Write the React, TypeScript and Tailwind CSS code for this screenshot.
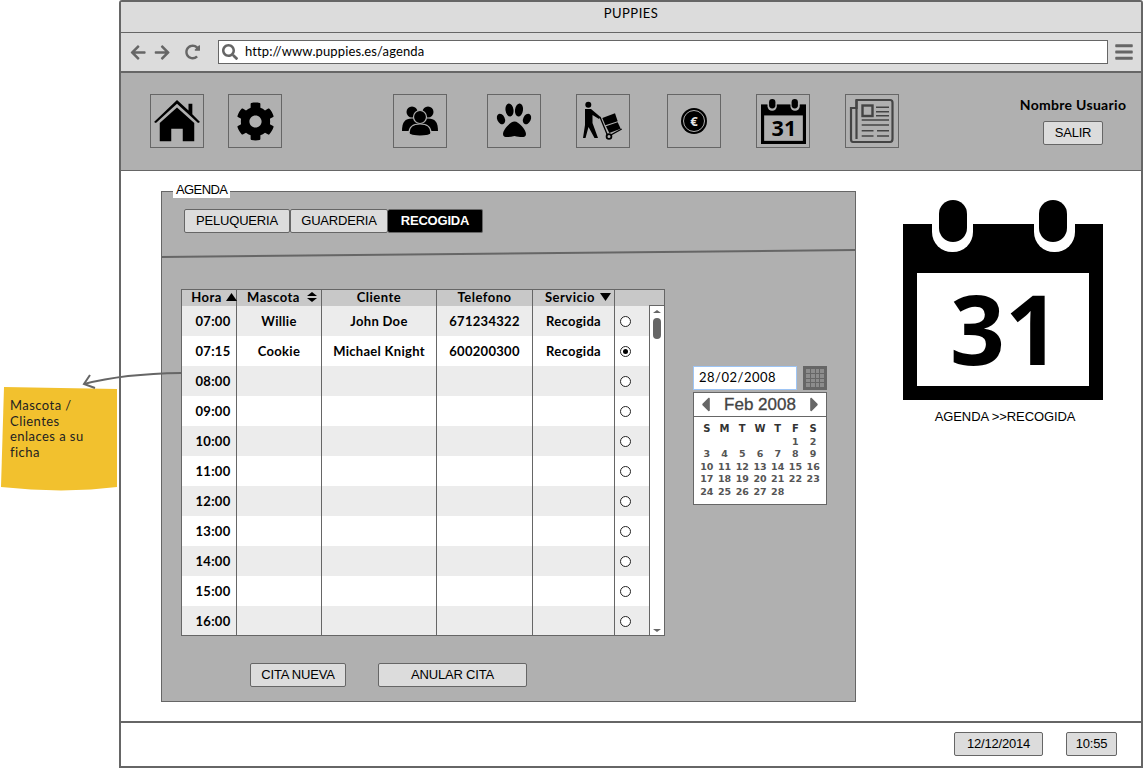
import {
  FaArrowLeft,
  FaArrowRight,
  FaBars,
  FaCaretLeft,
  FaCaretRight,
  FaCog,
  FaRedoAlt,
  FaSearch,
} from "react-icons/fa";

const rows = [
  { hora: "07:00", mascota: "Willie", cliente: "John Doe", telefono: "671234322", servicio: "Recogida" },
  { hora: "07:15", mascota: "Cookie", cliente: "Michael Knight", telefono: "600200300", servicio: "Recogida", selected: true },
  { hora: "08:00" },
  { hora: "09:00" },
  { hora: "10:00" },
  { hora: "11:00" },
  { hora: "12:00" },
  { hora: "13:00" },
  { hora: "14:00" },
  { hora: "15:00" },
  { hora: "16:00" },
];

const weeks = [
  ["", "", "", "", "", "1", "2"],
  ["3", "4", "5", "6", "7", "8", "9"],
  ["10", "11", "12", "13", "14", "15", "16"],
  ["17", "18", "19", "20", "21", "22", "23"],
  ["24", "25", "26", "27", "28", "", ""],
];

const CalendarIcon = ({ className, paper }: { className: string; paper: string }) => (
  <svg viewBox="0 0 200 200" className={className}>
    <rect x="0" y="24" width="200" height="176" fill="#000" />
    <rect x="29" y="0" width="41" height="52" rx="20" fill={paper} />
    <rect x="131" y="0" width="41" height="52" rx="20" fill={paper} />
    <rect x="29" y="0" width="41" height="24" fill={paper} />
    <rect x="131" y="0" width="41" height="24" fill={paper} />
    <rect x="36" y="0" width="28" height="42" rx="14" fill="#000" />
    <rect x="136" y="0" width="28" height="42" rx="14" fill="#000" />
    <rect x="14" y="73" width="172" height="113" fill={paper} />
    <text x="102" y="165" textAnchor="middle" fontSize="96" fontWeight="700" fontFamily="'Open Sans', sans-serif" fill="#000">
      31
    </text>
  </svg>
);

const NavBox = ({ className, children }: { className: string; children: React.ReactNode }) => (
  <div className={`flex h-[54px] w-[54px] shrink-0 items-center justify-center border border-[#666] ${className}`}>
    {children}
  </div>
);

const Btn = ({ className, children }: { className: string; children: React.ReactNode }) => (
  <div className={`flex items-center justify-center rounded-[2px] border border-[#666] bg-[#dcdcdc] text-[13px] tracking-[-0.2px] text-black ${className}`}>
    {children}
  </div>
);

const Th = ({ className, children }: { className?: string; children: React.ReactNode }) => (
  <div className={`flex items-center justify-center border-r border-[#666] pb-[2px] font-['Lato'] text-[13px] font-bold leading-[14px] tracking-[0.5px] ${className ?? ""}`}>
    {children}
  </div>
);

const Triangle = ({ className, path }: { className: string; path: string }) => (
  <svg viewBox="0 0 12 9" preserveAspectRatio="none" className={className}>
    <path d={path} />
  </svg>
);

const App = () => {
  return (
    <div className="flex h-[768px] w-[1143px] overflow-hidden bg-white font-['Liberation_Sans',sans-serif] text-black">
      {/* nota amarilla */}
      <div className="w-[119px] shrink-0 pl-px pt-[387px]">
        <div className="h-[104px] w-[117px] bg-[#f2c12e] pl-[9px] pt-[11px] font-['Lato'] text-[13px] leading-[15.5px] tracking-[0.45px] text-[#222] [clip-path:polygon(3px_0,116px_2px,116px_100px,90px_102.5px,60px_103.5px,30px_102.5px,0_100px)]">
          Mascota /<br />
          Clientes<br />
          enlaces a su<br />
          ficha
        </div>
      </div>

      {/* ventana */}
      <div className="relative flex h-[768px] w-[1024px] flex-col rounded-t-[3px] border-2 border-[#666]">
        <div className="flex h-[31px] shrink-0 justify-center border-b border-[#666] bg-[#dcdcdc] pt-[2px] font-['Lato'] text-[13px] tracking-[0.5px]">
          PUPPIES
        </div>
        <div className="flex h-[40px] shrink-0 items-center border-b-2 border-[#666] bg-[#dcdcdc] pl-[9px] pr-[8px]">
          <FaArrowLeft className="h-[17px] w-[17px] text-[#666]" />
          <FaArrowRight className="ml-[8px] h-[17px] w-[17px] text-[#666]" />
          <FaRedoAlt className="ml-[14px] h-[16px] w-[16px] text-[#666]" />
          <div className="ml-[18px] flex h-[24px] w-[890px] shrink-0 items-center border border-[#666] bg-white pl-[3px]">
            <FaSearch className="h-[16px] w-[16px] text-[#666]" />
            <span className="ml-[7px] font-['Lato'] text-[13px] tracking-[0.12px]">http://www.puppies.es/agenda</span>
          </div>
          <FaBars className="ml-[7px] h-[20px] w-[18px] shrink-0 text-[#666]" />
        </div>
        <div className="flex h-[98px] shrink-0 border-b border-[#666] bg-[#b0b0b0] pl-[29px] pt-[21px]">
          <NavBox className="">
            <svg viewBox="0 0 48 48" className="h-[46px] w-[46px]">
              <path d="M0 25 L24 2 L36 13 V6 H40 V17 L48 25 L46 26 L24 6 L2 26 Z" fill="#000" />
              <path d="M24 10 L42 26 V45 H30 V32 H18 V45 H6 V26 Z" fill="#000" />
            </svg>
          </NavBox>
          <NavBox className="ml-[24px]">
            <FaCog className="h-[39px] w-[39px] text-black" />
          </NavBox>
          <NavBox className="ml-[111px]">
            <svg viewBox="0 0 52 52" className="h-[52px] w-[52px]">
              <circle cx="18" cy="17" r="5.5" fill="#000" />
              <circle cx="34" cy="17" r="5.5" fill="#000" />
              <path d="M8 36 C8 27 11 23.5 18 23.5 C25 23.5 28 27 28 36 Z" fill="#000" />
              <path d="M24 36 C24 27 27 23.5 34 23.5 C41 23.5 44 27 44 36 Z" fill="#000" />
              <circle cx="26" cy="22" r="6.5" fill="#000" stroke="#b0b0b0" strokeWidth="1.2" />
              <path d="M15 38 C15 32 19 29 26 29 C33 29 37 32 37 38 C37 42 15 42 15 38 Z" fill="#000" stroke="#b0b0b0" strokeWidth="1.2" />
            </svg>
          </NavBox>
          <NavBox className="ml-[40px]">
            <svg viewBox="0 0 52 52" className="h-[52px] w-[52px]">
              <ellipse cx="21.5" cy="15" rx="4" ry="6.5" fill="#000" transform="rotate(-8 21.5 15)" />
              <ellipse cx="31" cy="15" rx="4" ry="6.5" fill="#000" transform="rotate(8 31 15)" />
              <ellipse cx="13" cy="24" rx="3.8" ry="5.5" fill="#000" transform="rotate(-25 13 24)" />
              <ellipse cx="39" cy="24" rx="3.8" ry="5.5" fill="#000" transform="rotate(25 39 24)" />
              <path d="M26.5 26.5 C31 26.5 38 35 38 39 C38 43 33 42.5 26.5 41 C20 42.5 15 43 15 39 C15 35 22 26.5 26.5 26.5 Z" fill="#000" />
            </svg>
          </NavBox>
          <NavBox className="ml-[35px]">
            <svg viewBox="0 0 52 52" className="h-[52px] w-[52px]">
              <circle cx="11.3" cy="9.7" r="3" fill="#000" />
              <path d="M8 14 H14 L23.5 22 L22 24 L15.5 20 V28 L21 43 H17.5 L11.5 32 L8.5 43 H6 L8 30 Z" fill="#000" />
              <path d="M23 22 L31 41.5 L44.7 34" stroke="#000" strokeWidth="1.3" fill="none" />
              <circle cx="32" cy="41.5" r="2.4" fill="#b0b0b0" stroke="#000" strokeWidth="1.8" />
              <path d="M25.3 23 L38 18.3 L40.7 26.3 L28.3 30.3 Z M29 31.3 L40.7 27.3 L43.7 33.7 L32.3 38 Z" fill="#000" />
            </svg>
          </NavBox>
          <NavBox className="ml-[37px]">
            <div className="flex h-[26px] w-[26px] items-center justify-center rounded-full bg-black">
              <div className="flex h-[22px] w-[22px] items-center justify-center rounded-full border border-[#b0b0b0] font-['Open_Sans'] text-[13px] font-bold leading-none text-[#e6e6e6]">
                €
              </div>
            </div>
          </NavBox>
          <NavBox className="ml-[35px]">
            <CalendarIcon className="h-[45px] w-[45px]" paper="#b0b0b0" />
          </NavBox>
          <NavBox className="ml-[35px]">
            <svg viewBox="0 0 52 52" className="h-[52px] w-[52px]">
              <path d="M10.5 5 H44 Q46.5 5 46.5 7.5 V44 Q46.5 47 44 47 H7 Q5 47 5 44 V13 H10.5 Z" fill="none" stroke="#444" strokeWidth="2.2" />
              <path d="M10.5 5 V44" stroke="#444" strokeWidth="2.2" fill="none" />
              <rect x="16.5" y="10.5" width="10" height="10.5" fill="none" stroke="#444" strokeWidth="2.4" />
              <path d="M30 12.3 H43 M30 16.7 H43 M30 20.7 H43 M15.7 25 H43 M15.7 30 H43 M15.7 35.7 H27.5 M31 35.7 H43 M15.7 41 H27.5 M31 41 H43" stroke="#444" strokeWidth="1.4" fill="none" />
            </svg>
          </NavBox>
          <div className="ml-[121px] flex w-[106px] flex-col items-center pt-[2px]">
            <span className="whitespace-nowrap font-['Lato'] text-[14px] font-bold leading-[18px] tracking-[0.3px]">Nombre Usuario</span>
            <Btn className="mt-[7px] h-[24px] w-[60px] shrink-0">SALIR</Btn>
          </div>
        </div>

        {/* contenido */}
        <div className="flex h-[552px] shrink-0 border-b-2 border-[#666]">
          <div className="pl-[40px] pt-[20px]">
            <div className="relative h-[511px] w-[695px] border border-[#666] bg-[#b0b0b0]">
              <span className="absolute -top-[10px] left-[11px] bg-white px-[3px] text-[13px] leading-[16px] tracking-[-0.6px]">AGENDA</span>
              <div className="ml-[22px] flex pt-[17px]">
                <Btn className="h-[24px] w-[106px]">PELUQUERIA</Btn>
                <Btn className="h-[24px] w-[98px]">GUARDERIA</Btn>
                <Btn className="h-[24px] w-[95px] border-l-0 !bg-black font-bold !text-white">RECOGIDA</Btn>
              </div>
              <svg viewBox="0 0 693 10" preserveAspectRatio="none" className="mt-[16px] block h-[10px] w-[693px]">
                <line x1="0" y1="8" x2="693" y2="1" stroke="#666" strokeWidth="2" />
              </svg>
              <div className="ml-[19px] mt-[30px] flex items-start">
                <div className="flex h-[347px] w-[484px] shrink-0 flex-col border border-[#666]">
                  <div className="grid h-[16px] shrink-0 grid-cols-[55px_85px_115px_96px_82px_1fr] bg-[#c8c8c8]">
                    <Th className="pl-[10px]">
                      Hora
                      <Triangle className="ml-[4px] h-[8px] w-[11px] shrink-0" path="M6 0 L12 9 H0 Z" />
                    </Th>
                    <Th className="pl-[6px]">
                      Mascota
                      <svg viewBox="0 0 10 10" className="ml-[7px] h-[10px] w-[10px]">
                        <path d="M5 0 L10 4 H0 Z M5 10 L10 6 H0 Z" fill="#000" />
                      </svg>
                    </Th>
                    <Th>Cliente</Th>
                    <Th>Telefono</Th>
                    <Th className="pl-[9px]">
                      Servicio
                      <Triangle className="ml-[5px] h-[8px] w-[11px] shrink-0" path="M0 0 H12 L6 9 Z" />
                    </Th>
                    <div />
                  </div>
                  <div className="flex min-h-0 flex-1">
                    <div className="min-w-0 flex-1 overflow-hidden">
                      {rows.map((row, index) => (
                        <div
                          key={row.hora}
                          className={`grid h-[30px] grid-cols-[55px_85px_115px_96px_82px_34px] items-stretch font-['Lato'] text-[13px] font-bold tracking-[0.3px] ${index % 2 === 0 ? "bg-[#ececec]" : "bg-white"}`}
                        >
                          <div className="flex items-center justify-center border-r border-[#666] pl-[8px] pt-[1px]">{row.hora}</div>
                          <div className="flex items-center justify-center border-r border-[#666] pt-[1px]">{row.mascota}</div>
                          <div className="flex items-center justify-center border-r border-[#666] pt-[1px]">{row.cliente}</div>
                          <div className="flex items-center justify-center border-r border-[#666] pt-[1px]">{row.telefono}</div>
                          <div className="flex items-center justify-center border-r border-[#666] pt-[1px]">{row.servicio}</div>
                          <div className="flex items-center pl-[5px]">
                            <div className="flex h-[11px] w-[11px] items-center justify-center rounded-full border border-[#222] bg-white">
                              {row.selected && <div className="h-[5px] w-[5px] rounded-full bg-black" />}
                            </div>
                          </div>
                        </div>
                      ))}
                    </div>
                    <div className="-mt-px flex w-[15px] shrink-0 flex-col items-center overflow-hidden border-l border-t border-[#666] bg-white pt-[4px]">
                      <Triangle className="h-[3px] w-[8px] shrink-0 fill-[#666]" path="M6 0 L12 9 H0 Z" />
                      <div className="mt-[5px] h-[21px] w-[8px] shrink-0 rounded-[4px] bg-[#666]" />
                      <Triangle className="mb-[3px] mt-auto h-[3px] w-[8px] shrink-0 fill-[#666]" path="M0 0 H12 L6 9 Z" />
                    </div>
                  </div>
                </div>

                {/* selector de fecha */}
                <div className="ml-[28px] mt-[77px] w-[134px] shrink-0">
                  <div className="flex items-center justify-between">
                    <div className="flex h-[24px] w-[104px] items-center border border-[#9ec5f5] bg-white pl-[5px] font-['Lato'] text-[13px] tracking-[0.5px]">
                      28/02/2008
                    </div>
                    <div className="grid h-[24px] w-[24px] grid-cols-4 gap-[1px] bg-[#666] p-[3px]">
                      {Array.from({ length: 16 }).map((_, i) => (
                        <div key={i} className="bg-[#8c8c8c]" />
                      ))}
                    </div>
                  </div>
                  <div className="mt-[2px] h-[113px] border border-[#666] bg-white">
                    <div className="flex h-[24px] items-center justify-between border-b border-[#666] px-[7px] text-[#444]">
                      <FaCaretLeft className="h-[23px] w-[9px] shrink-0 text-[#666]" />
                      <span className="text-[17px] [-webkit-text-stroke:0.3px_#444]">Feb 2008</span>
                      <FaCaretRight className="h-[23px] w-[9px] shrink-0 text-[#666]" />
                    </div>
                    <div className="px-[4px] pt-[6px]">
                      <div className="grid h-[12px] grid-cols-7 text-center font-['DejaVu_Sans'] text-[10px] font-bold leading-[12px] text-[#333]">
                        {["S", "M", "T", "W", "T", "F", "S"].map((d, i) => (
                          <span key={i}>{d}</span>
                        ))}
                      </div>
                      {weeks.map((week, i) => (
                        <div key={i} className="mt-[0.5px] grid h-[12px] grid-cols-7 text-center font-['DejaVu_Sans'] text-[9.5px] font-bold leading-[12px] text-[#555]">
                          {week.map((d, j) => (
                            <span key={j}>{d}</span>
                          ))}
                        </div>
                      ))}
                    </div>
                  </div>
                </div>
              </div>
              <div className="ml-[88px] mt-[27px] flex">
                <Btn className="h-[24px] w-[96px]">CITA NUEVA</Btn>
                <Btn className="ml-[32px] h-[24px] w-[149px]">ANULAR CITA</Btn>
              </div>
            </div>
          </div>
          <div className="ml-[47px] flex w-[200px] shrink-0 flex-col items-center pt-[29px]">
            <CalendarIcon className="h-[200px] w-[200px] shrink-0" paper="#fff" />
            <span className="ml-[4px] mt-[9px] whitespace-nowrap text-[13px] leading-[16px] tracking-[-0.1px]">AGENDA &gt;&gt;RECOGIDA</span>
          </div>
        </div>

        <div className="flex flex-1 items-start justify-end pr-[24px] pt-[9px]">
          <Btn className="h-[24px] w-[89px]">12/12/2014</Btn>
          <Btn className="ml-[23px] h-[24px] w-[51px]">10:55</Btn>
        </div>

        {/* flecha de la nota */}
        <svg className="pointer-events-none absolute -left-[40px] top-[368px] h-[20px] w-[102px] overflow-visible" viewBox="0 0 102 20">
          <path d="M3 14 C30 7 60 3.5 100 3" fill="none" stroke="#666" strokeWidth="2" />
          <path d="M9 5 L3 14 L14 18" fill="none" stroke="#666" strokeWidth="2" />
        </svg>
      </div>
    </div>
  );
};

export default App;
